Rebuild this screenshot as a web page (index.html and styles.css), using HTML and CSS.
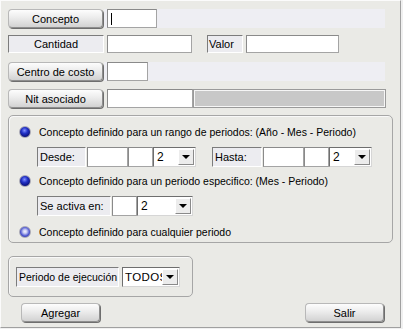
FILE: index.html
```html
<!DOCTYPE html>
<html lang="es">
<head>
    <meta charset="UTF-8">
    <title>Concepto</title>
    <link rel="stylesheet" href="styles.css">
</head>
<body>
    <div class="window">
        <!-- datos del concepto -->
        <div class="row">
            <button class="btn btn-side">Concepto</button>
            <div class="strip">
                <div class="field field-concepto"><span class="caret"></span></div>
            </div>
        </div>

        <div class="row row-cantidad">
            <div class="label label-side">Cantidad</div>
            <div class="field field-cantidad"></div>
            <div class="label label-valor">Valor</div>
            <div class="field field-valor"></div>
        </div>

        <div class="row row-centro">
            <button class="btn btn-side">Centro de costo</button>
            <div class="strip">
                <div class="field field-centro"></div>
            </div>
        </div>

        <div class="row row-nit">
            <button class="btn btn-side">Nit asociado</button>
            <div class="field field-nit"></div>
            <div class="nit-name"></div>
        </div>

        <!-- periodos -->
        <div class="group group-periodos">
            <div class="option option-first">
                <span class="radio"></span>
                <span>Concepto definido para un rango de periodos: (Año - Mes - Periodo)</span>
            </div>
            <div class="range">
                <div class="label label-desde">Desde:</div>
                <div class="field field-anio"></div>
                <div class="field field-mes"></div>
                <div class="select select-periodo"><span class="select-text">2</span><span class="select-btn"></span></div>

                <div class="label label-hasta">Hasta:</div>
                <div class="field field-anio"></div>
                <div class="field field-mes"></div>
                <div class="select select-periodo"><span class="select-text">2</span><span class="select-btn"></span></div>
            </div>

            <div class="option">
                <span class="radio"></span>
                <span>Concepto definido para un periodo especifico: (Mes - Periodo)</span>
            </div>
            <div class="range">
                <div class="label label-activa">Se activa en:</div>
                <div class="field field-mes"></div>
                <div class="select select-activa"><span class="select-text">2</span><span class="select-btn"></span></div>
            </div>

            <div class="option option-last">
                <span class="radio radio-light"></span>
                <span>Concepto definido para cualquier periodo</span>
            </div>
        </div>

        <div class="group group-ejecucion">
            <div class="label label-ejecucion">Periodo de ejecución</div>
            <div class="select select-todos"><span class="select-text">TODOS</span><span class="select-btn"></span></div>
        </div>

        <div class="actions">
            <button class="btn btn-action">Agregar</button>
            <button class="btn btn-action btn-salir">Salir</button>
        </div>
    </div>
</body>
</html>
```

FILE: styles.css
```css
* {
    box-sizing: border-box;
}

body {
    margin: 0;
    background-color: #f0f0f0;
    font-family: "Liberation Sans", Arial, sans-serif;
    font-size: 11px;
    color: #000;
}

.window {
    width: 401px;
    height: 328px;
    background-color: #eaeae6;
    border-top: 1px solid #fbfbfb;
    border-left: 1px solid #fbfbfb;
    border-right: 1px solid #a0a0a0;
    border-bottom: 1px solid #a0a0a0;
    padding: 8px 0 0 7px;
    display: flex;
    flex-direction: column;
}

.row {
    display: flex;
    align-items: center;
    height: 19px;
}

.row-cantidad {
    margin-top: 7px;
    height: 18px;
}

.row-centro {
    margin-top: 9px;
}

.row-nit {
    margin-top: 8px;
}

/* botones tipo XP */
.btn {
    font-family: inherit;
    font-size: 11px;
    color: #000;
    height: 19px;
    padding: 0;
    border: 1px solid #8e8e8e;
    border-top-color: #b8b8b8;
    border-left-color: #b8b8b8;
    border-radius: 4px;
    background: linear-gradient(#fdfdfd, #ececec 45%, #d2d2d2);
    box-shadow: 1px 1px 0 #6e6e6e;
}

.btn-side {
    width: 95px;
    margin-right: 1px;
}

.strip {
    width: 281px;
    height: 19px;
    background-color: #eeeef3;
    padding-left: 3px;
    display: flex;
    align-items: center;
}

.field {
    height: 19px;
    background-color: #fff;
    border: 1px solid #a4a4a4;
    border-top-color: #8a8a8a;
    border-left-color: #8a8a8a;
    position: relative;
}

.caret {
    position: absolute;
    left: 3px;
    top: 3px;
    width: 1px;
    height: 12px;
    background-color: #000;
}

.field-concepto { width: 50px; }
.field-centro { width: 41px; }

.field-cantidad {
    width: 85px;
    height: 18px;
    margin-left: 3px;
}

.field-valor {
    width: 93px;
    height: 18px;
    margin-left: 3px;
}

.field-nit {
    width: 86px;
    margin-left: 3px;
}

.nit-name {
    width: 193px;
    height: 19px;
    background-color: #c8c8c8;
    border: 1px solid #9a9a9a;
    box-shadow: inset 0 0 0 1px #f6f6f6;
}

.label {
    height: 18px;
    background-color: #ececf0;
    border: 1px solid #fff;
    border-top-color: #7c7c7c;
    border-left-color: #7c7c7c;
    padding-left: 2px;
    line-height: 16px;
    white-space: nowrap;
    overflow: hidden;
}

.label-side {
    width: 96px;
    text-align: center;
    padding-left: 0;
}

.label-valor {
    width: 36px;
    margin-left: 15px;
    padding-left: 1px;
}

/* cuadros agrupadores */
.group {
    border: 1px solid #a6a6a6;
    border-radius: 5px;
    box-shadow: inset 1px 1px 0 #f8f8f8;
}

.group-periodos {
    width: 385px;
    height: 128px;
    margin-top: 7px;
    padding-left: 10px;
}

.option {
    display: flex;
    align-items: center;
    height: 14px;
    margin-top: 7px;
    gap: 8px;
    font-size: 10.5px;
}

.option-first {
    margin-top: 9px;
}

.option-last {
    margin-top: 9px;
}

.radio {
    width: 12px;
    height: 12px;
    flex: 0 0 12px;
    border-radius: 50%;
    border: 1px solid #a9a9b6;
    background: radial-gradient(circle at 45% 35%, #8090ff 0, #2433c8 35%, #0a0f7a 75%, #05084a 100%);
}

.radio-light {
    background: radial-gradient(circle at 50% 45%, #f4f4ff 0, #c8cbf4 25%, #4c55d0 60%, #1a2090 100%);
}

.range {
    display: flex;
    align-items: center;
    height: 21px;
    margin-top: 7px;
    padding-left: 18px;
}

.range .label {
    height: 20px;
    line-height: 18px;
}

.range .field {
    height: 20px;
}

.label-desde { width: 49px; margin-right: 1px; }
.label-hasta { width: 50px; margin-left: 16px; margin-right: 1px; }
.label-activa { width: 74px; margin-right: 1px; }

.field-anio { width: 41px; }
.field-mes { width: 25px; }

/* combos */
.select {
    height: 20px;
    background-color: #fff;
    border: 1px solid #d6d6d6;
    border-top-color: #6e6e6e;
    border-left-color: #6e6e6e;
    display: flex;
    align-items: center;
    padding: 1px;
    overflow: hidden;
}

.select-text {
    flex: 1;
    font-size: 12px;
    padding-left: 2px;
    white-space: nowrap;
    overflow: hidden;
}

.select-btn {
    width: 16px;
    height: 16px;
    flex: 0 0 16px;
    background-color: #ececec;
    border: 1px solid #8a8a8a;
    border-top-color: #fff;
    border-left-color: #fff;
    display: flex;
    align-items: center;
    justify-content: center;
}

.select-btn::after {
    content: "";
    border-left: 4px solid transparent;
    border-right: 4px solid transparent;
    border-top: 4px solid #000;
}

.select-periodo { width: 43px; }
.select-activa { width: 56px; }

.select-todos {
    width: 58px;
    margin-left: 3px;
}

.select-todos .select-text {
    font-size: 11.5px;
    letter-spacing: 0.4px;
    padding-left: 1px;
    flex: 0 0 38px;
    width: 38px;
}

.group-ejecucion {
    width: 185px;
    height: 41px;
    margin-top: 13px;
    padding-left: 7px;
    display: flex;
    align-items: center;
}

.label-ejecucion {
    width: 103px;
    height: 20px;
    line-height: 18px;
    font-size: 10.5px;
}

.actions {
    display: flex;
    margin-top: 6px;
}

.btn-action {
    width: 79px;
    margin-left: 13px;
}

.btn-salir {
    margin-left: auto;
    margin-right: 16px;
}
```
